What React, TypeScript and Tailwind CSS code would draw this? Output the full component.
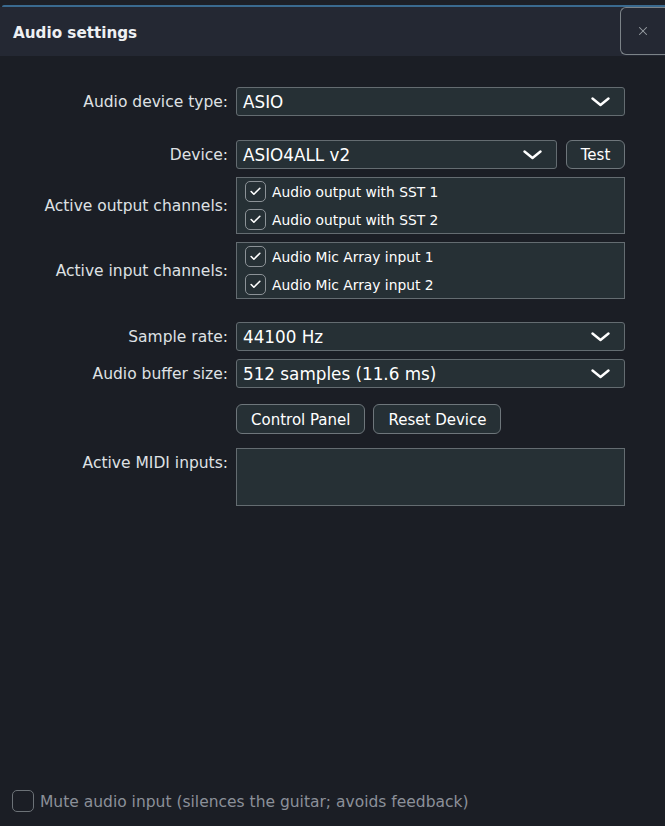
import { Check, X } from "lucide-react";
import type { ReactNode } from "react";

const font = { fontFamily: '"DejaVu Sans", Verdana, sans-serif' };

function Label({ children, top }: { children: ReactNode; top?: boolean }) {
  return (
    <div className={`w-[236px] shrink-0 pr-[8px] text-right text-[15.5px] text-[#dfe1e4] ${top ? "self-start pt-[4px]" : "pt-[3px]"}`}>
      {children}
    </div>
  );
}

function Chevron() {
  return (
    <svg width="19" height="10" viewBox="0 0 19 10" className="shrink-0">
      <polyline points="1.5,1.5 9.5,8 17.5,1.5" fill="none" stroke="white" strokeWidth="2.4" strokeLinecap="round" strokeLinejoin="round" />
    </svg>
  );
}

function Select({ value, className = "" }: { value: string; className?: string }) {
  return (
    <div
      className={`flex h-[29px] items-center justify-between rounded-[3px] border border-[#646c71] bg-[#263035] pl-[6px] pr-[14px] text-[16.8px] text-white ${className}`}
    >
      <span className="pt-[3px]">{value}</span>
      <Chevron />
    </div>
  );
}

function Box({ checked, label }: { checked: boolean; label: string }) {
  return (
    <div className="flex items-center gap-[6px]">
      <div className="flex h-[21px] w-[21px] items-center justify-center rounded-[5px] border-[1.5px] border-[#8c9297]">
        {checked && <Check size={13} strokeWidth={3} className="text-white" />}
      </div>
      <span className="pt-[2px] text-[13.8px] leading-[19px] text-white">{label}</span>
    </div>
  );
}

function ChannelList({ items }: { items: string[] }) {
  return (
    <div className="flex h-[57px] w-[389px] flex-col justify-center gap-[7px] border border-[#646c71] bg-[#263035] pl-[8px]">
      {items.map((i) => (
        <Box key={i} checked label={i} />
      ))}
    </div>
  );
}

function Button({ children }: { children: ReactNode }) {
  return (
    <button className="h-[30px] rounded-[6px] border border-[#6e767b] bg-[#263035] px-[14px] pt-[2px] text-[15px] text-white">
      {children}
    </button>
  );
}

export default function App() {
  return (
    <div style={font} className="flex h-[826px] w-[665px] flex-col overflow-hidden bg-[#1b1e25]">
      <div className="h-[7px] bg-[#1d2027]">
        <div className="ml-[2px] mt-[5px] h-[2px] rounded-tl-[6px] bg-[#3a6a8f]" />
      </div>
      <div className="flex h-[49px] items-center justify-between bg-[#242833] pl-[13px]">
        <h1 className="pt-[3px] text-[15.2px] font-bold text-[#eef0f3]">Audio settings</h1>
        <div className="flex h-[48px] w-[45px] items-center justify-center self-start rounded-l-[6px] border border-r-0 border-[#7c8388]">
          <X size={14} strokeWidth={1.8} className="text-[#9aa0a6]" />
        </div>
      </div>

      <div className="flex flex-1 flex-col pt-[31px]">
        <div className="flex items-center">
          <Label>Audio device type:</Label>
          <Select value="ASIO" className="w-[389px]" />
        </div>

        <div className="mt-[24px] flex items-center">
          <Label>Device:</Label>
          <Select value="ASIO4ALL v2" className="w-[321px]" />
          <button className="ml-[9px] h-[29px] w-[59px] rounded-[6px] border border-[#6e767b] bg-[#263035] pt-[2px] text-[15px] text-white">
            Test
          </button>
        </div>

        <div className="mt-[8px] flex items-center">
          <Label>Active output channels:</Label>
          <ChannelList items={["Audio output with SST 1", "Audio output with SST 2"]} />
        </div>

        <div className="mt-[8px] flex items-center">
          <Label>Active input channels:</Label>
          <ChannelList items={["Audio Mic Array input 1", "Audio Mic Array input 2"]} />
        </div>

        <div className="mt-[23px] flex items-center">
          <Label>Sample rate:</Label>
          <Select value="44100 Hz" className="w-[389px]" />
        </div>

        <div className="mt-[8px] flex items-center">
          <Label>Audio buffer size:</Label>
          <Select value="512 samples (11.6 ms)" className="w-[389px]" />
        </div>

        <div className="ml-[236px] mt-[16px] flex gap-[8px]">
          <Button>Control Panel</Button>
          <Button>Reset Device</Button>
        </div>

        <div className="mt-[14px] flex">
          <Label top>Active MIDI inputs:</Label>
          <div className="h-[58px] w-[389px] border border-[#646c71] bg-[#263035]" />
        </div>

        <div className="mt-auto mb-[12px] flex items-center gap-[6px] pl-[12px]">
          <div className="h-[22px] w-[22px] rounded-[5px] border-[1.5px] border-[#6c7277]" />
          <span className="pt-[2px] text-[15.5px] text-[#8b9099]">Mute audio input (silences the guitar; avoids feedback)</span>
        </div>
      </div>
    </div>
  );
}
